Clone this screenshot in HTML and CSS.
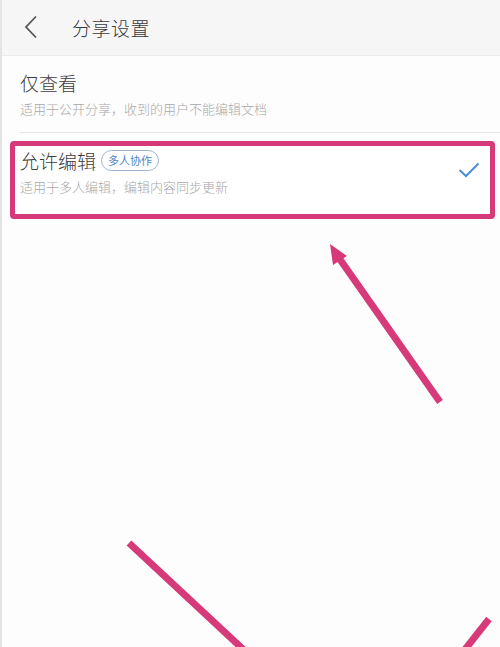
FILE: index.html
```html
<!DOCTYPE html>
<html lang="zh">
<head>
<meta charset="utf-8">
<link rel="stylesheet" href="styles.css">
</head>
<body>
<div class="screen">
  <header class="topbar">
    <svg class="back" width="14" height="24" viewBox="0 0 14 24"><path d="M12 1.5 L2 12 L12 22.5" fill="none" stroke="#555" stroke-width="1.8"/></svg>
    <span class="title">分享设置</span>
  </header>
  <div class="option">
    <div class="opt-text">
      <div class="opt-title">仅查看</div>
      <div class="opt-sub">适用于公开分享，收到的用户不能编辑文档</div>
    </div>
  </div>
  <div class="divider"></div>
  <div class="option selected">
    <div class="opt-text">
      <div class="opt-title">允许编辑 <span class="badge">多人协作</span></div>
      <div class="opt-sub">适用于多人编辑，编辑内容同步更新</div>
    </div>
    <svg class="check" width="22" height="16" viewBox="0 0 22 16"><path d="M1.5 8 L8 14 L20.5 1.5" fill="none" stroke="#4a8fd4" stroke-width="2"/></svg>
  </div>
  <svg class="arrows" width="500" height="647" viewBox="0 0 500 647">
    <g stroke="#d63a78" stroke-width="7" fill="none" stroke-linecap="butt">
      <line x1="440" y1="402" x2="339" y2="258"/>
      <line x1="129" y1="543" x2="246" y2="652"/>
      <line x1="489" y1="619" x2="463" y2="652"/>
    </g>
    <polygon points="330,244 347,256 333,265" fill="#d63a78"/>
  </svg>
</div>
</body>
</html>
```
FILE: styles.css
```css
html, body {
  margin: 0;
  padding: 0;
  background: #fdfdfd;
}
.screen {
  position: relative;
  width: 500px;
  height: 647px;
  overflow: hidden;
  box-sizing: border-box;
  border-left: 2px solid #e4e4e4;
  font-family: "Noto Sans CJK SC", "Noto Sans", sans-serif;
}
.topbar {
  height: 56px;
  background: #f6f6f6;
  border-bottom: 1px solid #ececec;
  box-sizing: border-box;
  display: flex;
  align-items: center;
  padding-left: 22px;
}
.back {
  margin-right: 34px;
  margin-top: -1px;
}
.title {
  font-size: 19px;
  color: #3a3a3a;
  font-weight: 300;
  letter-spacing: 0.5px;
}
.option {
  display: flex;
  align-items: center;
  padding: 0 18px;
}
.opt-text { flex: 1; }
.opt-title {
  font-size: 19px;
  color: #3c3c3c;
  font-weight: 300;
  line-height: 26px;
  display: flex;
  align-items: center;
  gap: 5px;
}
.opt-sub {
  font-size: 13px;
  color: #a8a8a8;
  font-weight: 300;
  line-height: 18px;
  margin-top: 4px;
}
.topbar + .option {
  padding-top: 14px;
  padding-bottom: 14px;
}
.divider {
  height: 1px;
  background: #e6e6e6;
  margin-left: 18px;
}
.selected {
  margin: 8px 5px 0 8px;
  border: 5px solid #d63a78;
  border-radius: 4px;
  padding: 2px 10px 18px 5px;
  background: #fff;
}
.badge {
  font-size: 11px;
  color: #4f86c8;
  font-weight: 400;
  border: 1px solid #9fb5cf;
  border-radius: 11px;
  padding: 0 6px;
  line-height: 19px;
  margin-top: -2px;
}
.check {
  margin-top: -4px;
}
.arrows {
  position: absolute;
  left: -2px;
  top: 0;
}
```
